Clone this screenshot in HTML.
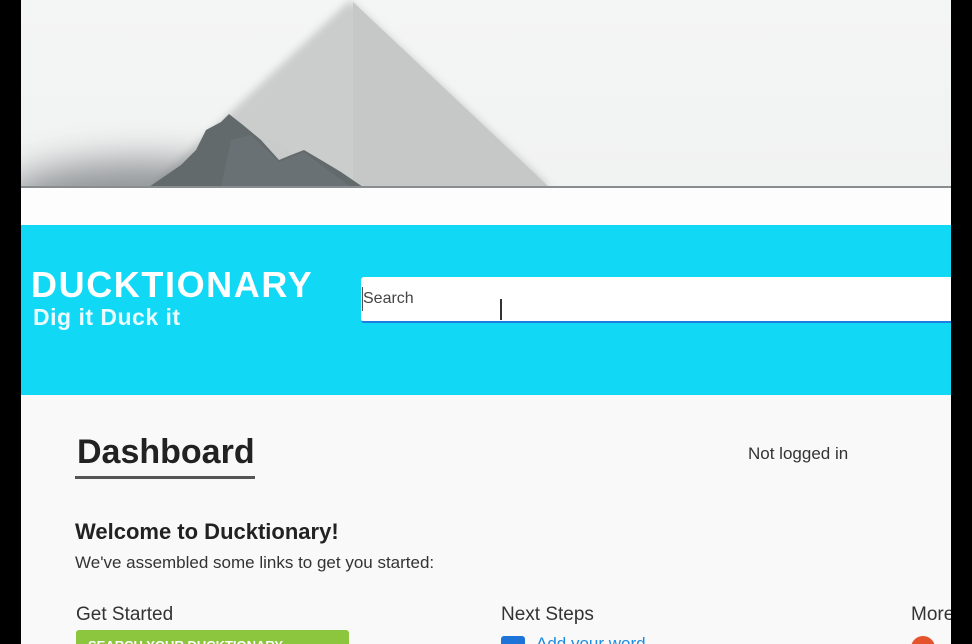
<!DOCTYPE html>
<html><head><meta charset="utf-8"><style>
*{margin:0;padding:0;box-sizing:border-box}
body{width:972px;height:644px;overflow:hidden;background:#000;position:relative;font-family:"Liberation Sans",sans-serif}
#page{position:absolute;left:21px;top:0;width:930px;height:644px;background:#f9f9f9;overflow:hidden}
#hero{position:absolute;left:0;top:0;width:930px;height:187px;background:linear-gradient(#f4f5f5,#f1f2f2);overflow:hidden}
#hero-line{position:absolute;left:0;top:186px;width:930px;height:2px;background:#8a8d8f}
#white{position:absolute;left:0;top:188px;width:930px;height:37px;background:#fdfdfd}
#cyan{position:absolute;left:0;top:225px;width:930px;height:170px;background:#10d8f5}
.logo{position:absolute;left:10px;top:264px;color:#fff;font-weight:bold;font-size:36px;letter-spacing:1.6px}
.tag{position:absolute;left:12px;top:304px;color:#eafcff;font-weight:bold;font-size:23px;letter-spacing:0.5px}
#search{position:absolute;left:340px;top:277px;width:600px;height:46px;background:#fff;border-radius:3px 0 0 3px;border-bottom:2px solid #1a7fe0;font-size:16px;color:#444;padding:13px 0 0 2px}
#search:before{content:"";position:absolute;left:1px;top:10px;width:1px;height:24px;background:#555}
.h1{position:absolute;left:56px;top:433px;font-size:34px;font-weight:bold;color:#222}
.ul{position:absolute;left:54px;top:476px;width:180px;height:3px;background:#555}
.nl{position:absolute;left:727px;top:444px;font-size:17px;color:#333}
.h2{position:absolute;left:54px;top:519px;font-size:22px;font-weight:bold;color:#222}
.p{position:absolute;left:54px;top:553px;font-size:17px;color:#333}
.h3{position:absolute;top:604px;font-size:19px;color:#333}
.btn{position:absolute;left:55px;top:630px;width:273px;height:20px;background:#8cc63f;border-radius:3px;color:#fff;font-size:13px;font-weight:bold;padding:8px 0 0 12px}
</style></head><body>
<div id="page">
<div id="hero">
<svg width="930" height="187" style="position:absolute;left:0;top:0">
<defs>
<filter id="b" x="-50%" y="-50%" width="200%" height="200%"><feGaussianBlur stdDeviation="18"/></filter>
<filter id="s" x="-20%" y="-20%" width="140%" height="140%"><feGaussianBlur stdDeviation="4"/></filter>
</defs>
<polygon points="329,0 530,187 130,187" fill="#cbcccc" filter="url(#s)"/>
<polygon points="332,2 528,187 332,187" fill="#c6c7c7"/>
<ellipse cx="120" cy="200" rx="140" ry="40" fill="#6a7072" filter="url(#b)" opacity="0.7"/>
<polygon points="128,187 160,165 175,150 185,130 200,122 208,114 222,125 240,140 258,160 270,155 283,150 300,160 320,172 342,187" fill="#636a6c"/>
<polygon points="200,187 210,140 230,135 258,162 283,152 300,165 330,187" fill="#707779" opacity="0.6"/>
</svg>
</div>
<div id="hero-line"></div>
<div id="white"></div>
<div id="cyan"></div>
<div class="logo">DUCKTIONARY</div>
<div class="tag">Dig it Duck it</div>
<div id="search">Search</div>
<div style="position:absolute;left:479px;top:299px;width:2px;height:21px;background:#333"></div>
<div class="h1">Dashboard</div>
<div class="ul"></div>
<div class="nl">Not logged in</div>
<div class="h2">Welcome to Ducktionary!</div>
<div class="p">We've assembled some links to get you started:</div>
<div class="h3" style="left:55px">Get Started</div>
<div class="h3" style="left:480px">Next Steps</div>
<div class="h3" style="left:890px">More</div>
<div class="btn">SEARCH YOUR DUCKTIONARY</div>
<div style="position:absolute;left:480px;top:636px;width:24px;height:20px;background:#1e73d8;border-radius:3px"></div>
<div style="position:absolute;left:515px;top:634px;font-size:17px;color:#1e8ce0">Add your word</div>
<div style="position:absolute;left:890px;top:636px;width:24px;height:24px;background:#e5532d;border-radius:50%"></div>
</div>
</body></html>
